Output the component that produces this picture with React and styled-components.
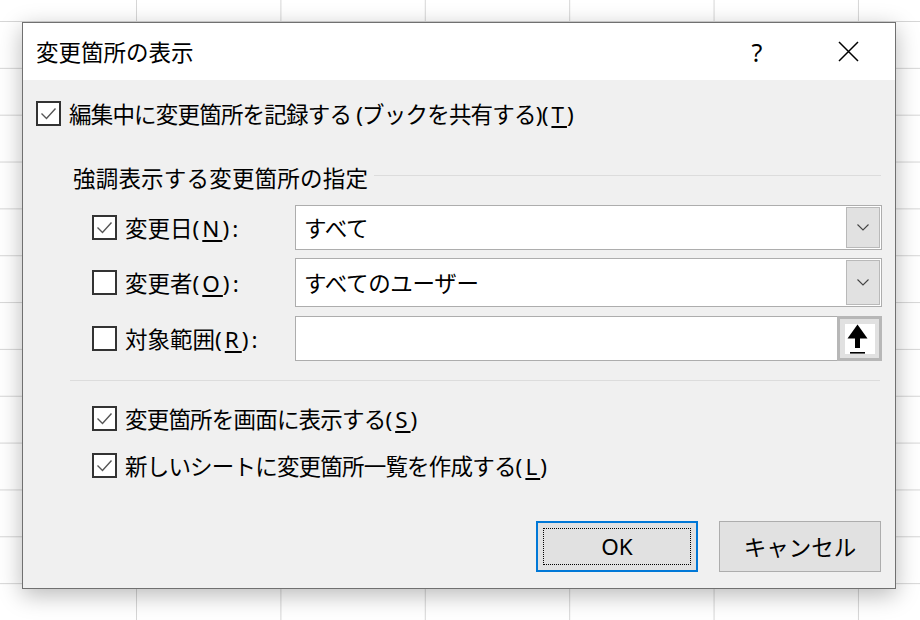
import React from "react";
import styled, { createGlobalStyle } from "styled-components";

const GlobalStyle = createGlobalStyle`
  html, body {
    margin: 0;
    padding: 0;
  }
  body {
    width: 920px;
    height: 620px;
    overflow: hidden;
    font-family: "Noto Sans", "Noto Sans CJK JP", sans-serif;
    color: #000;
    background-color: #fff;
    background-image:
      linear-gradient(to right, #d6d6d6 1px, transparent 1px),
      linear-gradient(to bottom, #d6d6d6 1px, transparent 1px);
    background-size: 144.4px 46.85px;
    background-position: -8.4px 21px;
  }
`;

const Page = styled.div`
  padding: 22px 0 0 22px;
`;

const Dialog = styled.div`
  width: 874px;
  box-sizing: border-box;
  border: 1px solid #707070;
  background: #f0f0f0;
  box-shadow: 0 6px 22px rgba(0, 0, 0, 0.28);
  display: flex;
  flex-direction: column;
`;

const TitleBar = styled.div`
  height: 57px;
  background: #fff;
  display: flex;
  align-items: center;
  padding: 0 24px 0 13px;
`;

const Title = styled.div`
  font-size: 22.5px;
  flex: 1;
`;

const TitleButton = styled.div`
  width: 46px;
  height: 46px;
  display: flex;
  align-items: center;
  justify-content: center;
  font-size: 25px;
  margin-left: ${(p) => p.$gap || 0}px;
`;

const Body = styled.div`
  display: flex;
  flex-direction: column;
  padding: 0 13px 16px;
  font-size: 22.5px;
  letter-spacing: -0.8px;
`;

const TopRow = styled.label`
  margin-top: 13px;
  height: 40px;
  display: flex;
  align-items: center;
  gap: 8px;
  white-space: nowrap;
`;

const Box = styled.span`
  width: 25px;
  height: 25px;
  box-sizing: border-box;
  border: 2px solid #333;
  background: #fff;
  display: flex;
  align-items: center;
  justify-content: center;
  flex-shrink: 0;
`;

const GroupHeader = styled.div`
  margin: 29px 1px 0 37px;
  height: 30px;
  display: flex;
  align-items: center;
  white-space: nowrap;
  letter-spacing: 0.2px;

  &::after {
    content: "";
    flex: 1;
    height: 1px;
    margin: -4px 0 0 6px;
    background: #dcdcdc;
  }
`;

const FieldRow = styled.div`
  margin: ${(p) => p.$top}px 0 0 56px;
  height: ${(p) => p.$h}px;
  display: grid;
  grid-template-columns: 25px 162px 1fr;
  column-gap: 8px;
  align-items: center;
`;

const Label = styled.span`
  white-space: nowrap;
  letter-spacing: 0;
`;

const Accel = styled.span`
  letter-spacing: 3px;
`;

const Key = styled.u`
  text-underline-offset: 3px;
  text-decoration-thickness: 2px;
`;

const Combo = styled.div`
  height: 100%;
  box-sizing: border-box;
  border: 1px solid #adadad;
  background: #fff;
  display: flex;
  align-items: stretch;
`;

const ComboText = styled.div`
  flex: 1;
  display: flex;
  align-items: center;
  padding-left: 8px;
  letter-spacing: -0.3px;
`;

const DropButton = styled.div`
  width: 34px;
  margin: 1px;
  box-sizing: border-box;
  background: #e1e1e1;
  border: 1px solid #b9b9b9;
  display: flex;
  align-items: center;
  justify-content: center;
`;

const RefButton = styled.div`
  width: 45px;
  margin: -1px -1px -1px 0;
  box-sizing: border-box;
  border: 3px solid #b7b7b7;
  background: #e1e1e1;
  display: flex;
  align-items: center;
  justify-content: center;
`;

const RefIcon = styled.div`
  width: 30px;
  height: 30px;
  background: #fff;
  display: flex;
`;

const Separator = styled.div`
  margin: 19px 2px 0 34px;
  height: 1px;
  background: #dcdcdc;
`;

const CheckRow = styled.label`
  margin: ${(p) => p.$top}px 0 0 56px;
  height: 40px;
  display: flex;
  align-items: center;
  gap: 8px;
  white-space: nowrap;
`;

const ButtonRow = styled.div`
  margin: 36px 1px 0 0;
  display: flex;
  justify-content: flex-end;
  gap: 21px;
`;

const Button = styled.div`
  width: 162px;
  height: 51px;
  box-sizing: border-box;
  background: #e1e1e1;
  border: ${(p) => (p.$default ? "2px solid #0078d7" : "1px solid #adadad")};
  padding: ${(p) => (p.$default ? "5px" : "0")};
  display: flex;
  font-size: 22.5px;
  letter-spacing: 0;
`;

const ButtonFace = styled.div`
  flex: 1;
  display: flex;
  align-items: center;
  justify-content: center;
  border: ${(p) => (p.$focus ? "1px dotted #000" : "none")};
`;

const Check = () => (
  <svg width="19" height="19" viewBox="0 0 19 19">
    <path d="M2.5 9.5 L7.5 14.5 L16.5 4.5" fill="none" stroke="#555" strokeWidth="1.4" />
  </svg>
);

const Checkbox = ({ checked }) => <Box>{checked && <Check />}</Box>;

const Mnemonic = ({ k, colon }) => (
  <Accel>
    (<Key>{k}</Key>){colon ? ":" : ""}
  </Accel>
);

const Chevron = () => (
  <svg width="12" height="7" viewBox="0 0 12 7">
    <path d="M0.5 0.5 L6 6 L11.5 0.5" fill="none" stroke="#444" strokeWidth="1.1" />
  </svg>
);

const UpArrow = () => (
  <svg width="30" height="30" viewBox="0 0 30 30">
    <polygon points="12.5,0.5 22.5,14.5 2.5,14.5" fill="#000" />
    <rect x="10" y="13" width="5" height="11" fill="#000" />
    <rect x="5" y="28" width="15" height="1.6" fill="#000" />
  </svg>
);

const CloseIcon = () => (
  <svg width="21" height="21" viewBox="0 0 21 21">
    <path d="M1 1 L20 20 M20 1 L1 20" stroke="#000" strokeWidth="1.5" />
  </svg>
);

export default function App() {
  return (
    <>
      <GlobalStyle />
      <Page>
        <Dialog>
          <TitleBar>
            <Title>変更箇所の表示</Title>
            <TitleButton>?</TitleButton>
            <TitleButton $gap={45}>
              <CloseIcon />
            </TitleButton>
          </TitleBar>
          <Body>
            <TopRow>
              <Checkbox checked />
              <span>
                編集中に変更箇所を記録する (ブックを共有する)<Mnemonic k="T" />
              </span>
            </TopRow>
            <GroupHeader>強調表示する変更箇所の指定</GroupHeader>
            <FieldRow $top={13} $h={45}>
              <Checkbox checked />
              <Label>
                変更日<Mnemonic k="N" colon />
              </Label>
              <Combo>
                <ComboText>すべて</ComboText>
                <DropButton>
                  <Chevron />
                </DropButton>
              </Combo>
            </FieldRow>
            <FieldRow $top={8} $h={49}>
              <Checkbox />
              <Label>
                変更者<Mnemonic k="O" colon />
              </Label>
              <Combo>
                <ComboText>すべてのユーザー</ComboText>
                <DropButton>
                  <Chevron />
                </DropButton>
              </Combo>
            </FieldRow>
            <FieldRow $top={9} $h={45}>
              <Checkbox />
              <Label>
                対象範囲<Mnemonic k="R" colon />
              </Label>
              <Combo>
                <ComboText />
                <RefButton>
                  <RefIcon>
                    <UpArrow />
                  </RefIcon>
                </RefButton>
              </Combo>
            </FieldRow>
            <Separator />
            <CheckRow $top={17}>
              <Checkbox checked />
              <span>
                変更箇所を画面に表示する<Mnemonic k="S" />
              </span>
            </CheckRow>
            <CheckRow $top={7}>
              <Checkbox checked />
              <span>
                新しいシートに変更箇所一覧を作成する<Mnemonic k="L" />
              </span>
            </CheckRow>
            <ButtonRow>
              <Button $default>
                <ButtonFace $focus>OK</ButtonFace>
              </Button>
              <Button>
                <ButtonFace>キャンセル</ButtonFace>
              </Button>
            </ButtonRow>
          </Body>
        </Dialog>
      </Page>
    </>
  );
}
